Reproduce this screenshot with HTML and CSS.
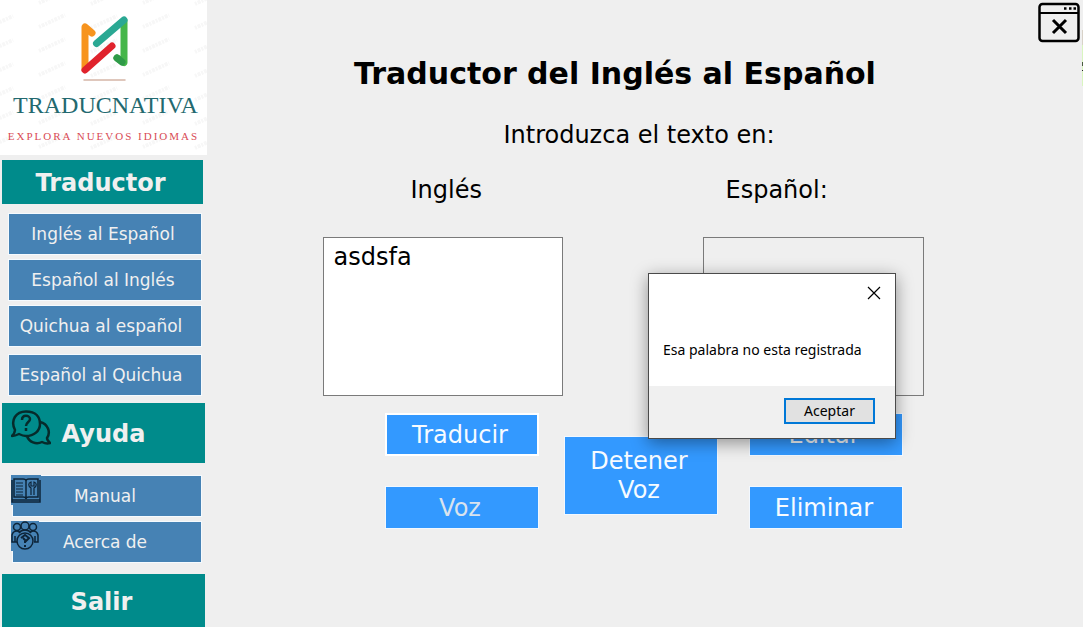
FILE: index.html
```html
<!DOCTYPE html>
<html lang="es">
<head>
<meta charset="utf-8">
<meta name="viewport" content="width=device-width, initial-scale=1">
<title>Traducnativa</title>
<link rel="stylesheet" href="styles.css">
</head>
<body>
<div class="app">
  <aside class="sidebar">
    <div class="brand">
      <svg class="brand-marks" aria-hidden="true">
        <defs>
          <pattern id="marks" width="104" height="24" patternUnits="userSpaceOnUse">
            <path d="M-13 4l26-12M-13 28l26-12M39 27l26-12M39 3l26-12M91 28l26-12M91 4l26-12" stroke="#f7f7f7" stroke-width="4" stroke-dasharray="2 1 3 1"/>
          </pattern>
        </defs>
        <rect width="100%" height="100%" fill="url(#marks)"/>
      </svg>
      <svg class="brand-logo" width="50" height="70" viewBox="80 14 50 70" fill="none" stroke-linecap="round" stroke-linejoin="round" stroke-width="7" aria-hidden="true">
        <path d="M93 33l-7-6v42" stroke="#f7941e"/>
        <path d="M118 58l7 4.500V21" stroke="#45b649"/>
        <path d="M118 58l5 4" stroke="#2f9a48"/>
        <path d="M97.500 43.500L125 20" stroke="#2aa893"/>
        <path d="M86 70l27-24" stroke="#e0222c"/>
        <path d="M85 80h41" stroke="#d5b5a6" stroke-width="1.500"/>
      </svg>
      <div class="brand-name">TRADUCNATIVA</div>
      <div class="brand-tagline">EXPLORA NUEVOS IDIOMAS</div>
    </div>
    <nav class="menu">
      <h2 class="section">Traductor</h2>
      <div class="group">
        <button class="item">Inglés al Español</button>
        <button class="item">Español al Inglés</button>
        <button class="item item-wide">Quichua al español</button>
        <button class="item item-wide item-last">Español al Quichua</button>
      </div>
      <h2 class="section section-help">
        <svg class="icon-help" width="40" height="36" viewBox="0 0 40 36" fill="none" stroke="#062b2b" stroke-width="2.500" stroke-linejoin="round" aria-hidden="true">
          <path d="M4 20C-1 10 5 1.500 15 1.500S29 7 29 14s-6 12-14 12c-3 0-5-1-7-2-2 1-4 2-7 2 2-2 3-4 3-6z"/>
          <path d="M29 12c8 2 11 10 7 16 0 2 2 4 3 5-3 1-6 0-8-1-6 3-13 0-15-6"/>
          <path d="M11 10c0-6 8-5 8-1 0 3-4 3-4 7M15 18v3"/>
        </svg>
        <span>Ayuda</span>
      </h2>
      <div class="group group-help">
        <button class="item item-icon">
          <svg class="icon-item" width="30" height="30" viewBox="0 0 30 30" fill="none" stroke="#0d2438" stroke-width="1.500" aria-hidden="true">
            <path d="M3 22V4h9q3 0 3 2 0-2 3-2h9v18H18q-3 0-3 2 0-2-3-2zM15 6v18M1 5v22h28V5M1 25h28"/>
            <path d="M5 8h7M5 11h7M5 14h7M5 17h7M5 20h7" stroke-width="1"/>
            <path d="M20 20v-7c-3-2-3-5 0-6v4h3V7c3 1 3 4 0 6v7" stroke-width="1.200"/>
          </svg>
          Manual
        </button>
        <button class="item item-icon">
          <svg class="icon-item" width="28" height="30" viewBox="0 0 28 30" fill="none" stroke="#0d2438" stroke-width="1.500" aria-hidden="true">
            <circle cx="6" cy="6" r="3.500"/><circle cx="14" cy="5" r="4"/><circle cx="22" cy="6" r="3.500"/>
            <path d="M6 21H1v-7q1-4 5-4 2 0 3 2M19 12q1-2 3-2 4 0 5 4v7h-4M4 15v6M24 15v6M8 12q2-3 6-3t6 3"/>
            <circle cx="14" cy="20" r="8"/>
            <path d="M10 17l4-3 4 3-3 3-3-3M14 20v2M14 24v2" stroke-width="2"/>
          </svg>
          Acerca de
        </button>
      </div>
      <button class="section section-exit">Salir</button>
    </nav>
  </aside>

  <main class="main">
    <button class="close" aria-label="Cerrar">
      <svg width="42" height="42" viewBox="0 0 42 42" fill="none" stroke="#000" aria-hidden="true">
        <rect x="1.500" y="3" width="39" height="37" rx="3" stroke-width="2.500"/>
        <path d="M2 12h38" stroke-width="2"/>
        <path d="M26 7.500h2.500M31 7.500h2.500M35.500 7.500H38" stroke-width="2.500"/>
        <path d="M15 19l13 13M28 19L15 32" stroke-width="3"/>
      </svg>
    </button>
    <h1 class="title">Traductor del Inglés al Español</h1>
    <p class="prompt">Introduzca el texto en:</p>
    <div class="fields">
      <div class="field">
        <label class="label" for="source">Inglés</label>
        <textarea class="box" id="source">asdsfa</textarea>
      </div>
      <div class="field field-target">
        <label class="label" for="target">Español:</label>
        <textarea class="box box-target" id="target" readonly></textarea>
      </div>
    </div>
    <div class="actions">
      <div class="stack">
        <button class="action action-focus">Traducir</button>
        <button class="action action-off" disabled>Voz</button>
      </div>
      <button class="action action-tall">Detener<br>Voz</button>
      <div class="stack stack-end">
        <button class="action">Editar</button>
        <button class="action">Eliminar</button>
      </div>
    </div>
    <div class="edge" aria-hidden="true"></div>
  </main>

  <div class="dialog" role="dialog" aria-labelledby="message">
    <div class="dialog-body">
      <button class="dialog-close" aria-label="Cerrar mensaje">
        <svg width="14" height="14" viewBox="0 0 14 14" stroke="#000" stroke-width="1.200" aria-hidden="true"><path d="M1 1l12 12M13 1L1 13"/></svg>
      </button>
      <p class="message" id="message">Esa palabra no esta registrada</p>
    </div>
    <div class="dialog-foot"><button class="accept">Aceptar</button></div>
  </div>
</div>
</body>
</html>
```
FILE: styles.css
```css
* { box-sizing: border-box; }

body {
  margin: 0;
  background: #efefef;
  color: #000;
  font-family: "DejaVu Sans", Verdana, sans-serif;
}

button { font-family: inherit; margin: 0; cursor: pointer; }

.app {
  position: relative;
  display: grid;
  grid-template-columns: 207px 1fr;
  min-height: 100vh;
}

.sidebar { display: flex; flex-direction: column; }

.brand {
  position: relative;
  display: flex;
  flex-direction: column;
  align-items: center;
  height: 155px;
  padding-top: 14px;
  background: #fff;
  font-family: "Liberation Serif", serif;
  white-space: nowrap;
}

.brand-marks { position: absolute; inset: 0; width: 100%; height: 100%; }
.brand-logo { position: relative; flex: none; }
.brand-name { position: relative; margin-top: 7px; padding-left: 4px; font-size: 24px; line-height: 28px; color: #23696f; }
.brand-tagline { position: relative; margin-top: 11px; font-size: 11px; line-height: 12px; letter-spacing: 2px; color: #d94b55; }

.menu { display: flex; flex: 1; flex-direction: column; padding: 5px 2px 0; }

.section {
  display: flex;
  align-items: center;
  justify-content: center;
  height: 44px;
  margin: 0 2px 0 0;
  padding: 2px 4px 0 0;
  border: 0;
  background: #008b8b;
  color: #f0f0f0;
  font-size: 24px;
  font-weight: 700;
}

.section-help { position: relative; height: 60px; margin-right: 0; padding-right: 0; }
.section-exit { flex: 1; min-height: 53px; margin-right: 0; }
.icon-help { position: absolute; left: 9px; top: 7px; }

.group { display: flex; flex-direction: column; gap: 4px; padding: 9px 3px 7px 6px; }
.group-help { padding: 12px 3px 11px 10px; }

.item {
  position: relative;
  height: 42px;
  padding: 0 4px 0 0;
  border: 1px solid #f5fafe;
  background: #4682b4;
  color: #f0f0f0;
  font-size: 17px;
  white-space: nowrap;
}

.item-wide { padding-right: 8px; }
.item-last { margin-top: 3px; }
.icon-item { position: absolute; left: -2px; top: -1px; background: #4682b4; }

.main { position: relative; display: flex; flex-direction: column; align-items: center; }
.close { position: absolute; top: 1px; right: 3px; padding: 0; border: 0; background: none; line-height: 0; }
.title { margin: 54px 60px 0 0; font-size: 30px; line-height: 40px; }
.prompt { margin: 25px 12px 0 0; font-size: 24px; line-height: 32px; }

.fields { display: flex; gap: 140px; margin: 23px 44px 0 0; }
.field { display: flex; flex-direction: column; width: 240px; }
.field-target { width: 221px; }
.label { padding-left: 88px; font-size: 24px; line-height: 32px; }
.field-target .label { padding-left: 23px; }

.box {
  width: 100%;
  height: 159px;
  margin-top: 31px;
  padding: 5px 10px;
  border: 1px solid #7a7a7a;
  background: #fff;
  font-family: inherit;
  font-size: 24px;
  line-height: 28px;
  resize: none;
}

.box-target { background: #efefef; }

.actions {
  display: grid;
  grid-template-columns: 154px 154px 160px;
  align-items: center;
  justify-content: center;
  gap: 25px;
  margin: 17px 2px 0 0;
}

.stack { display: flex; flex-direction: column; gap: 30px; }
.stack-end { align-items: flex-end; }

.action {
  width: 154px;
  height: 43px;
  padding: 2px 4px 0 0;
  border: 1px solid #f2f8ff;
  background: #3399ff;
  color: #f7fbff;
  font-size: 24px;
  line-height: 29px;
}

.action-focus { border: 2px solid #fff; }
.action-off { color: #d9e3ee; }
.action-tall { height: 79px; margin-top: 8px; }

.edge {
  position: absolute;
  top: 30px;
  right: 0;
  width: 1px;
  height: 56px;
  background: linear-gradient(#d8d2c8 0 15px, #d9f5c0 15px 32px, #4a5a40 32px 36px, #d9f5c0 36px 40px, #222 40px 41px, #d9f5c0 41px);
}

.dialog {
  position: absolute;
  left: 648px;
  top: 273px;
  width: 248px;
  border: 1px solid #4a4a4a;
  background: #fff;
  box-shadow: 0 4px 16px rgba(0, 0, 0, 0.4);
  font-family: "Noto Sans", sans-serif;
  font-size: 14px;
}

.dialog-body { display: flex; flex-direction: column; height: 112px; padding: 12px 14px; }
.dialog-close { align-self: flex-end; padding: 0; border: 0; background: none; line-height: 0; }
.message { margin: 40px 0 0; line-height: 20px; white-space: nowrap; }
.dialog-foot { display: flex; justify-content: flex-end; padding: 12px 20px 14px; background: #f0f0f0; }

.accept {
  width: 91px;
  height: 26px;
  padding: 0;
  border: 2px solid #0078d7;
  background: #e1e1e1;
  font-size: 14px;
  line-height: 20px;
}
```
